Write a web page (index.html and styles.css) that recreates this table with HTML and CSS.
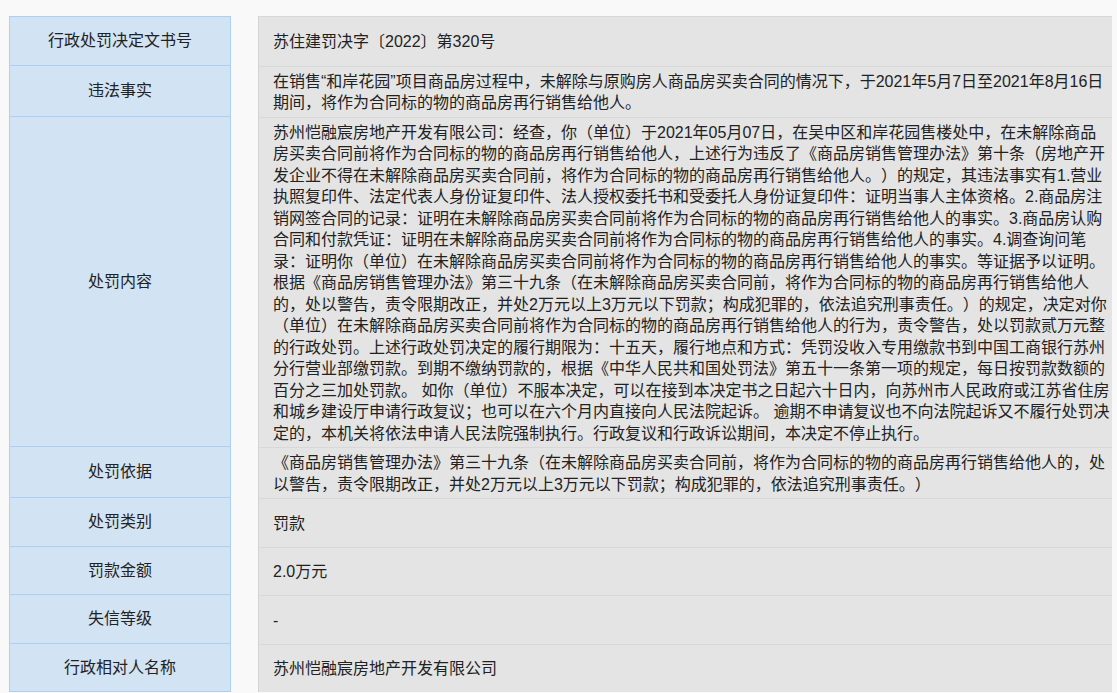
FILE: index.html
```html
<!DOCTYPE html>
<html lang="zh-CN">
<head>
  <meta charset="UTF-8">
  <meta name="viewport" content="width=device-width, initial-scale=1.0">
  <title>行政处罚信息</title>
  <link rel="stylesheet" href="styles.css">
</head>
<body>
  <div class="detail">
    <div class="row first">
      <div class="label">行政处罚决定文书号</div>
      <div class="value">苏住建罚决字〔2022〕第320号</div>
    </div>
    <div class="row">
      <div class="label">违法事实</div>
      <div class="value">在销售“和岸花园”项目商品房过程中，未解除与原购房人商品房买卖合同的情况下，于2021年5月7日至2021年8月16日期间，将作为合同标的物的商品房再行销售给他人。</div>
    </div>
    <div class="row">
      <div class="label">处罚内容</div>
      <div class="value"><p>苏州恺融宸房地产开发有限公司：经查，你（单位）于2021年05月07日，在吴中区和岸花园售楼处中，在未解除商品房买卖合同前将作为合同标的物的商品房再行销售给他人，上述行为违反了《商品房销售管理办法》第十条（房地产开发企业不得在未解除商品房买卖合同前，将作为合同标的物的商品房再行销售给他人。）的规定，其违法事实有1.营业执照复印件、法定代表人身份证复印件、法人授权委托书和受委托人身份证复印件：证明当事人主体资格。2.商品房注销网签合同的记录：证明在未解除商品房买卖合同前将作为合同标的物的商品房再行销售给他人的事实。3.商品房认购合同和付款凭证：证明在未解除商品房买卖合同前将作为合同标的物的商品房再行销售给他人的事实。4.调查询问笔录：证明你（单位）在未解除商品房买卖合同前将作为合同标的物的商品房再行销售给他人的事实。等证据予以证明。<br>根据《商品房销售管理办法》第三十九条（在未解除商品房买卖合同前，将作为合同标的物的商品房再行销售给他人的，处以警告，责令限期改正，并处2万元以上3万元以下罚款；构成犯罪的，依法追究刑事责任。）的规定，决定对你（单位）在未解除商品房买卖合同前将作为合同标的物的商品房再行销售给他人的行为，责令警告，处以罚款贰万元整的行政处罚。上述行政处罚决定的履行期限为：十五天，履行地点和方式：凭罚没收入专用缴款书到中国工商银行苏州分行营业部缴罚款。到期不缴纳罚款的，根据《中华人民共和国处罚法》第五十一条第一项的规定，每日按罚款数额的百分之三加处罚款。 如你（单位）不服本决定，可以在接到本决定书之日起六十日内，向苏州市人民政府或江苏省住房和城乡建设厅申请行政复议；也可以在六个月内直接向人民法院起诉。 逾期不申请复议也不向法院起诉又不履行处罚决定的，本机关将依法申请人民法院强制执行。行政复议和行政诉讼期间，本决定不停止执行。</p></div>
    </div>
    <div class="row">
      <div class="label">处罚依据</div>
      <div class="value">《商品房销售管理办法》第三十九条（在未解除商品房买卖合同前，将作为合同标的物的商品房再行销售给他人的，处以警告，责令限期改正，并处2万元以上3万元以下罚款；构成犯罪的，依法追究刑事责任。）</div>
    </div>
    <div class="row">
      <div class="label">处罚类别</div>
      <div class="value">罚款</div>
    </div>
    <div class="row">
      <div class="label">罚款金额</div>
      <div class="value">2.0万元</div>
    </div>
    <div class="row">
      <div class="label">失信等级</div>
      <div class="value">-</div>
    </div>
    <div class="row">
      <div class="label">行政相对人名称</div>
      <div class="value">苏州恺融宸房地产开发有限公司</div>
    </div>
  </div>
</body>
</html>
```

FILE: styles.css
```css
body { margin: 0; padding: 16px 0 0 9px; background: #f9f9f9; color: #222; font-family: "Liberation Sans", Arial, "Noto Sans CJK SC", sans-serif; font-size: 16px; line-height: 21.5px; text-spacing-trim: space-all; }
.detail { width: 1103px; }
.row { display: grid; grid-template-columns: 222px 854px; column-gap: 27px; }
.label, .value { box-sizing: border-box; display: flex; align-items: center; }
.label { justify-content: center; text-align: center; padding: 13px 8px; background: #d2e3f4; border: 1px solid #a9d0f5; border-top: none; }
.row.first .label { border-top: 1px solid #a9d0f5; }
.value { padding: 4px 1px 3px 14px; background: #e4e4e4; border-left: 1px solid #d3d3d3; border-top: 1px solid #d8d8d8; }
.value p { margin: 0; }
```
